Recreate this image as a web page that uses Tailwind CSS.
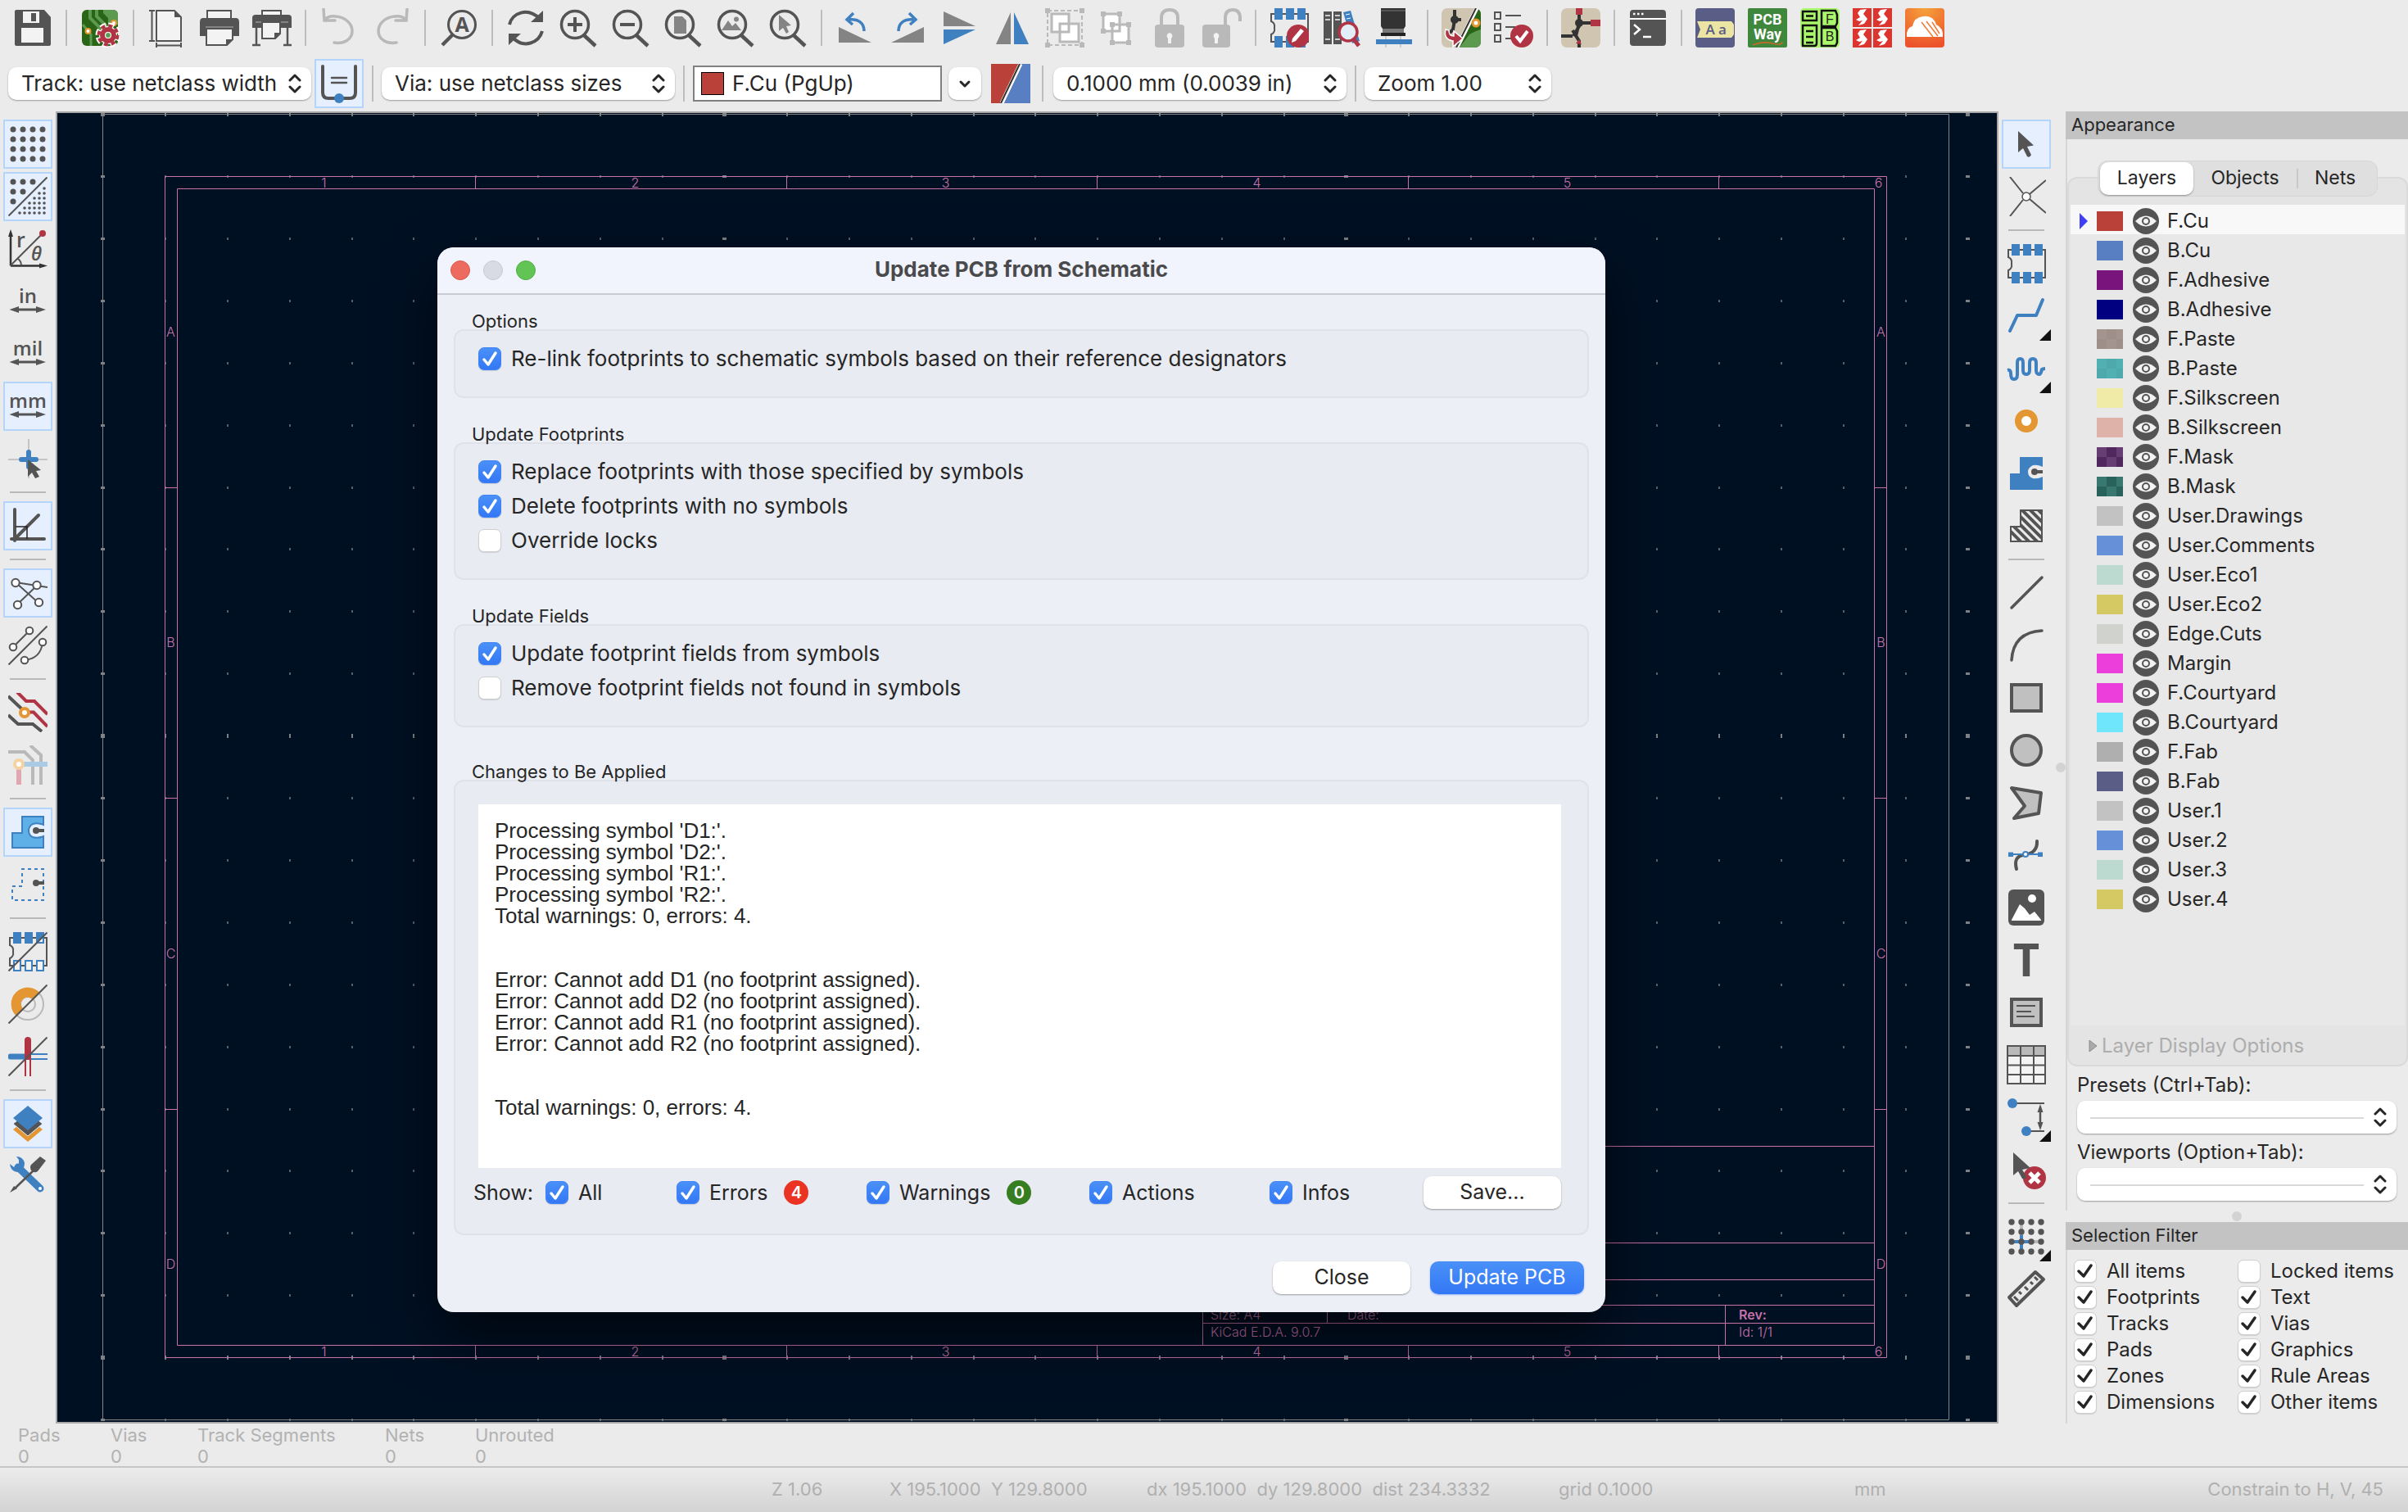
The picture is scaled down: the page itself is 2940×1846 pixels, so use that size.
<!DOCTYPE html>
<html lang="en">
<head>
    <meta charset="UTF-8">
    <meta name="viewport" content="width=device-width, initial-scale=1.0">
    <title>PCB Editor</title>
    <script src="https://cdn.jsdelivr.net/npm/@tailwindcss/browser@4"></script>
</head>
<body class="flex flex-col h-screen overflow-hidden bg-[#ebebeb] font-['Inter',sans-serif] text-[26px] leading-8 text-[#262626]">

    <!-- main toolbar -->
    <div id="topBar" class="flex items-center gap-1 h-17 pl-2.5 shrink-0"></div>

    <!-- track / via / layer / grid / zoom -->
    <div class="flex items-center h-17 pl-2.5 shrink-0">
        <div class="relative w-[370px] h-10">
            <select aria-label="Track width" class="appearance-none size-full pl-4 rounded-[10px] bg-white shadow-[0_1px_2px_rgba(0,0,0,0.35)]"><option>Track: use netclass width</option></select>
            <svg class="absolute right-3 top-2 w-4 h-6 pointer-events-none" viewBox="0 0 16 24" fill="none" stroke="#262626" stroke-width="3" stroke-linecap="round" stroke-linejoin="round"><path d="M2 8l6-6 6 6M2 16l6 6 6-6"/></svg>
        </div>
        <button aria-label="Use starting track width" class="ml-1 flex items-center justify-center size-15 border-2 border-[#b5d4fc] bg-[#e6effe]">
            <svg class="size-12" viewBox="0 0 48 48" fill="none" stroke="#545454" stroke-width="4" stroke-linecap="round"><path d="M4 3V35Q4 42 11 42H37Q44 42 44 35V3"/><path d="M15 17H33M15 23H33" stroke-width="2.5"/><circle cx="24" cy="42" r="6" fill="#3f80c0" stroke="none"/></svg>
        </button>
        <div class="mx-2.5 w-0.5 h-11 bg-[#bdbdbd]"></div>
        <div class="relative w-[358px] h-10">
            <select aria-label="Via size" class="appearance-none size-full pl-4 rounded-[10px] bg-white shadow-[0_1px_2px_rgba(0,0,0,0.35)]"><option>Via: use netclass sizes</option></select>
            <svg class="absolute right-3 top-2 w-4 h-6 pointer-events-none" viewBox="0 0 16 24" fill="none" stroke="#262626" stroke-width="3" stroke-linecap="round" stroke-linejoin="round"><path d="M2 8l6-6 6 6M2 16l6 6 6-6"/></svg>
        </div>
        <div class="mx-2.5 w-0.5 h-11 bg-[#bdbdbd]"></div>
        <div class="flex items-center gap-2.5 w-[304px] h-11 pl-2 border-2 border-[#808080] bg-white">
            <span class="size-7 shrink-0 border border-black bg-[#b9413a]"></span>
            <input aria-label="Active layer" type="text" readonly value="F.Cu (PgUp)" class="w-full min-w-0 outline-none">
        </div>
        <button aria-label="Choose layer" class="ml-2 flex items-center justify-center w-10 h-10 rounded-[10px] bg-white shadow-[0_1px_2px_rgba(0,0,0,0.35)]">
            <svg class="size-4" viewBox="0 0 16 16" fill="none" stroke="#262626" stroke-width="3" stroke-linecap="round" stroke-linejoin="round"><path d="M3 6l5 5 5-5"/></svg>
        </button>
        <button aria-label="Layer pair" class="ml-3">
            <svg class="size-12" viewBox="0 0 48 48"><path d="M0 0H34L12 48H0z" fill="#b9413a"/><path d="M36 0H48V48H14z" fill="#587fc2"/><path d="M36 0L13 48" stroke="#fff" stroke-width="5"/><path d="M35 0L12 48" stroke="#333" stroke-width="2"/></svg>
        </button>
        <div class="ml-3.5 mr-3 w-0.5 h-11 bg-[#bdbdbd]"></div>
        <div class="relative w-[358px] h-10">
            <select aria-label="Grid" class="appearance-none size-full pl-4 rounded-[10px] bg-white shadow-[0_1px_2px_rgba(0,0,0,0.35)]"><option>0.1000 mm (0.0039 in)</option></select>
            <svg class="absolute right-3 top-2 w-4 h-6 pointer-events-none" viewBox="0 0 16 24" fill="none" stroke="#262626" stroke-width="3" stroke-linecap="round" stroke-linejoin="round"><path d="M2 8l6-6 6 6M2 16l6 6 6-6"/></svg>
        </div>
        <div class="mx-2.5 w-0.5 h-11 bg-[#bdbdbd]"></div>
        <div class="relative w-[228px] h-10">
            <select aria-label="Zoom" class="appearance-none size-full pl-4 rounded-[10px] bg-white shadow-[0_1px_2px_rgba(0,0,0,0.35)]"><option>Zoom 1.00</option></select>
            <svg class="absolute right-3 top-2 w-4 h-6 pointer-events-none" viewBox="0 0 16 24" fill="none" stroke="#262626" stroke-width="3" stroke-linecap="round" stroke-linejoin="round"><path d="M2 8l6-6 6 6M2 16l6 6 6-6"/></svg>
        </div>
    </div>

    <main class="flex flex-1 min-h-0">
        <nav id="leftBar" class="flex flex-col gap-1 w-17 pl-1 pt-2.5 shrink-0"></nav>

        <div class="flex-1 min-w-0 border-2 border-[#a9a9a9] bg-[#001023]">
            <svg id="board" class="block size-full" viewBox="70 138 2368 1598" preserveAspectRatio="xMinYMin slice"></svg>
        </div>

        <nav id="rightBar" class="flex flex-col gap-1 w-[70px] pl-1 pt-2.5 shrink-0"></nav>
        <div class="flex items-center w-3 shrink-0"><span class="size-3 rounded-full bg-[#d3d3d3]"></span></div>

        <aside class="flex flex-col w-[418px] shrink-0 text-[24px]">
            <h2 class="h-[34px] pl-[7px] leading-8 text-[22px] bg-[#c3c3c3]">Appearance</h2>
            <div class="flex flex-col flex-1 min-h-0 border-l-2 border-[#d6d6d6]">
                <div class="flex flex-col flex-1 min-h-0 mt-[46px] rounded-xl border-2 border-[#dadada] bg-[#e4e4e4]">
                    <div class="flex items-center self-center -mt-[22px] h-11 w-[342px] p-0.5 rounded-xl bg-[#dfdfdf] border border-[#d6d6d6] text-[23px] shrink-0">
                        <button class="w-[114px] h-10 pb-0.5 rounded-[10px] bg-white shadow-[0_1px_2px_rgba(0,0,0,0.35)]">Layers</button>
                        <button class="w-[126px] pb-0.5">Objects</button>
                        <span class="w-0.5 h-6 bg-[#c8c8c8]"></span>
                        <button class="flex-1 pb-0.5 pr-1">Nets</button>
                    </div>
                    <ul id="layers" class="flex-1 min-h-0 mt-2.5 mx-0.5 overflow-hidden bg-[#e8e8e8]"></ul>
                    <button class="flex items-center gap-1 h-12 pl-6 pt-0.5 text-[#adadad]">
                        <svg class="w-3 h-4" viewBox="0 0 12 16"><path d="M1 1L10 8 1 15z" fill="#a9a9a9" stroke="#8d8d8d"/></svg>
                        Layer Display Options
                    </button>
                </div>
                <label for="presets" class="h-[42px] pl-3 leading-[46px]">Presets (Ctrl+Tab):</label>
                <div class="relative ml-3 mr-3.5 h-10">
                    <select id="presets" class="appearance-none size-full rounded-[10px] bg-white shadow-[0_1px_2px_rgba(0,0,0,0.35)]"><option></option></select>
                    <span class="absolute left-4 right-10 top-5 h-0.5 bg-[#d9d9d9]"></span>
                    <svg class="absolute right-3 top-2 w-4 h-6 pointer-events-none" viewBox="0 0 16 24" fill="none" stroke="#262626" stroke-width="3" stroke-linecap="round" stroke-linejoin="round"><path d="M2 8l6-6 6 6M2 16l6 6 6-6"/></svg>
                </div>
                <label for="viewports" class="h-[42px] pl-3 leading-[46px]">Viewports (Option+Tab):</label>
                <div class="relative ml-3 mr-3.5 mb-3 h-10">
                    <select id="viewports" class="appearance-none size-full rounded-[10px] bg-white shadow-[0_1px_2px_rgba(0,0,0,0.35)]"><option></option></select>
                    <span class="absolute left-4 right-10 top-5 h-0.5 bg-[#d9d9d9]"></span>
                    <svg class="absolute right-3 top-2 w-4 h-6 pointer-events-none" viewBox="0 0 16 24" fill="none" stroke="#262626" stroke-width="3" stroke-linecap="round" stroke-linejoin="round"><path d="M2 8l6-6 6 6M2 16l6 6 6-6"/></svg>
                </div>
            </div>
            <div class="flex justify-center items-center h-3.5"><span class="size-3 rounded-full bg-[#d3d3d3]"></span></div>
            <h2 class="h-[34px] pl-[7px] leading-8 text-[22px] bg-[#c3c3c3]">Selection Filter</h2>
            <div id="filter" class="grid grid-cols-[200px_1fr] auto-rows-[32px] py-2.5 pl-2 border-l-2 border-[#d6d6d6] whitespace-nowrap"></div>
        </aside>
    </main>

    <!-- board statistics -->
    <dl class="flex h-13 pl-[22px] pt-px shrink-0 text-[22px] leading-[26px] text-[#b2b2b2]">
        <div class="w-[113px]"><dt>Pads</dt><dd>0</dd></div>
        <div class="w-[106px]"><dt>Vias</dt><dd>0</dd></div>
        <div class="w-[229px]"><dt>Track Segments</dt><dd>0</dd></div>
        <div class="w-[110px]"><dt>Nets</dt><dd>0</dd></div>
        <div><dt>Unrouted</dt><dd>0</dd></div>
    </dl>

    <footer class="flex items-center h-14 pl-[942px] pr-[30px] pb-0.5 shrink-0 border-t-2 border-[#c6c6c6] bg-linear-to-b from-[#ececec] to-[#d3d3d3] text-[22px] text-[#b0b0b0] whitespace-pre">
        <span class="w-[144px]">Z 1.06</span>
        <span class="w-[314px]">X 195.1000  Y 129.8000</span>
        <span class="w-[503px]">dx 195.1000  dy 129.8000  dist 234.3332</span>
        <span class="w-[361px]">grid 0.1000</span>
        <span>mm</span>
        <span class="ml-auto">Constrain to H, V, 45</span>
    </footer>

    <div role="dialog" aria-labelledby="dialogTitle" class="absolute left-[534px] top-[302px] w-[1426px] rounded-[20px] overflow-hidden bg-[#eceff5] shadow-[0_30px_70px_rgba(0,0,0,0.6)]">
        <div class="relative flex items-center gap-4 h-[58px] pl-4 border-b-2 border-[#c9ccd2] bg-[#f1f4fc]">
            <button aria-label="Close window" class="size-6 rounded-full border border-[#d8584c] bg-[#ed6a5e]"></button>
            <button aria-label="Minimize" class="size-6 rounded-full border border-[#c6c9d0] bg-[#d8dbe3]"></button>
            <button aria-label="Zoom window" class="size-6 rounded-full border border-[#53ad45] bg-[#61c454]"></button>
            <h1 id="dialogTitle" class="absolute inset-x-0 pb-0.5 text-center font-bold text-[#4a4a4c] pointer-events-none">Update PCB from Schematic</h1>
        </div>
        <div class="px-5 pt-5 pb-[22px]">
            <h2 class="h-[22px] pl-[22px] leading-6 text-[22px]">Options</h2>
            <div id="options" class="flex flex-col gap-3.5 px-7 pt-5 pb-8 rounded-xl border-2 border-[#dfe2e8] bg-[#e8ebf1]"></div>

            <h2 class="mt-8 h-[22px] pl-[22px] leading-6 text-[22px]">Update Footprints</h2>
            <div id="footprints" class="flex flex-col gap-3.5 px-7 pt-5 pb-8 rounded-xl border-2 border-[#dfe2e8] bg-[#e8ebf1]"></div>

            <h2 class="mt-8 h-[22px] pl-[22px] leading-6 text-[22px]">Update Fields</h2>
            <div id="fields" class="flex flex-col gap-3.5 px-7 pt-5 pb-8 rounded-xl border-2 border-[#dfe2e8] bg-[#e8ebf1]"></div>

            <h2 class="mt-[42px] h-[22px] pl-[22px] leading-6 text-[22px]">Changes to Be Applied</h2>
            <div class="pl-7 pr-8 pt-7 pb-[30px] rounded-xl border-2 border-[#dfe2e8] bg-[#e8ebf1]">
                <div class="h-[444px] pl-5 pt-[19px] bg-white font-['Liberation_Sans',Arial,sans-serif] text-[26px] leading-[26px] whitespace-pre">Processing symbol 'D1:'.
Processing symbol 'D2:'.
Processing symbol 'R1:'.
Processing symbol 'R2:'.
Total warnings: 0, errors: 4.


Error: Cannot add D1 (no footprint assigned).
Error: Cannot add D2 (no footprint assigned).
Error: Cannot add R1 (no footprint assigned).
Error: Cannot add R2 (no footprint assigned).


Total warnings: 0, errors: 4.</div>
                <div class="grid grid-cols-[88px_160px_232px_272px_220px_1fr] items-center -ml-1.5 mt-2.5 h-10 text-[25px]">
                    <span>Show:</span>
                    <div data-check="All"></div>
                    <div data-check="Errors" class="flex items-center gap-5"></div>
                    <div data-check="Warnings" class="flex items-center gap-5"></div>
                    <div data-check="Actions"></div>
                    <div class="flex items-center justify-between">
                        <div data-check="Infos"></div>
                    </div>
                </div>
            </div>
            <div class="flex justify-end gap-6 mt-8 mr-1.5 text-[25px]">
                <button class="w-[168px] h-10 pb-0.5 rounded-[10px] bg-white shadow-[0_1px_2px_rgba(0,0,0,0.35)]">Close</button>
                <button class="w-[188px] h-10 pb-0.5 rounded-[10px] bg-linear-to-b from-[#4a90f8] to-[#3477f5] text-white shadow-[0_1px_2px_rgba(52,119,245,0.5)]">Update PCB</button>
            </div>
        </div>
    </div>

    <script>
        const D = "#545454", B = "#3f80c0", R = "#b03444", O = "#e49632", L = "#b9b9b9", G = "#848484";

        const footprint = (y1, y2) => `<path d="M2 ${y1}V16Q7 18 6 24Q7 30 2 32V${y2}H47V${y1}z" fill="none" stroke="${D}" stroke-width="2"/>`;
        const pads = (y) => `<path d="M6 ${y}h10v14h-10zM20 ${y}h10v14h-10zM34 ${y}h10v14h-10z" fill="${B}"/>`;
        const lens = `<circle cx="20" cy="20" r="16.5" fill="none" stroke="${D}" stroke-width="3.5"/><path d="M31 33L45 46" stroke="${D}" stroke-width="4.5"/>`;
        const slash = `<path d="M.5 47.5L47.5 .5" stroke="${D}" stroke-width="2"/>`;
        const cursor = (x, y) => `<path transform="translate(${x} ${y})" d="M0 0V26L6 21L11 31Q14 33 16 29L11 19L19 17.5z" fill="${D}"/>`;
        const unit = (t) => `<text x="24" y="26" font-family="Open Sans" font-weight="600" font-size="24" text-anchor="middle" fill="${D}">${t}</text><path d="M1.5 34L13 30V32.5H34V30L46 34L34 38V35.5H13V38z" fill="${D}"/>`;
        const dots = (list, r) => list.map(([x, y]) => `<circle cx="${x}" cy="${y}" r="${r}" fill="${D}"/>`).join("");
        const grid4 = [];
        for (const y of [6, 18, 30, 42]) for (const x of [6, 18, 30, 42]) grid4.push([x, y]);
        const fine = [];
        for (let i = 0; i < 6; i++) for (let j = 5 - i; j < 6; j++) fine.push([14 + j * 6, 14 + i * 6]);

        const icons = {
            save: `<path d="M2 4Q2 2 4 2H38L46 11V44Q46 46 44 46H4Q2 46 2 44z" fill="${D}"/><path d="M12 4H32V18H12zM10 24H37V42H10z" fill="#f3f3f3"/><path d="M22 6H28V16H22z" fill="${D}"/>`,
            boardSetup: `<rect x="2" y="2" width="44" height="44" rx="6" fill="#2a6416"/><path d="M12 2V12L24 24V30M20 2V10L32 22V28" fill="none" stroke="#5c9a50" stroke-width="4"/><path d="M28 2V6L34 12V20H46V8Q46 2 40 2z" fill="#5c9a50"/><path d="M3 20L13 32V46" fill="none" stroke="#5c9a50" stroke-width="3"/><circle cx="9.5" cy="28" r="3" fill="#fff" stroke="${O}" stroke-width="2"/><circle cx="41" cy="18" r="3" fill="#fff" stroke="${O}" stroke-width="2"/><circle cx="34" cy="33" r="11" fill="none" stroke="#fff" stroke-width="9" stroke-dasharray="6 2.64"/><circle cx="34" cy="33" r="11" fill="#fff"/><circle cx="34" cy="33" r="7" fill="none" stroke="${R}" stroke-width="6"/><circle cx="34" cy="33" r="11.5" fill="none" stroke="${R}" stroke-width="4" stroke-dasharray="5 4.03"/><circle cx="34" cy="33" r="3.5" fill="#5c9a50" stroke="#fff"/>`,
            page: `<path d="M2 3H9M2 40H9M5.5 3V40M11 42V48M41 42V48M11 45.5H41" fill="none" stroke="${D}" stroke-width="2"/><path d="M11 3H33L41 11V40H11z" fill="#f3f3f3" stroke="${D}" stroke-width="2"/><path d="M33 3V11H41z" fill="${D}"/>`,
            print: `<path d="M9 13V3H38V13" fill="#f3f3f3" stroke="${D}" stroke-width="2"/><path d="M4 12H44Q48 12 48 17V34H0V17Q0 12 4 12z" fill="${D}"/><path d="M7 23H41" stroke="${G}" stroke-width="2"/><path d="M8 25H40V38L33 45H8z" fill="#f3f3f3" stroke="${D}" stroke-width="2"/><path d="M32 38H40L32 46z" fill="${D}"/>`,
            plot: `<path d="M12 9V3H35V9" fill="#f3f3f3" stroke="${D}" stroke-width="2"/><path d="M4 8H44Q48 8 48 12V24H0V12Q0 8 4 8z" fill="${D}"/><path d="M4 17H44" stroke="${G}" stroke-width="2"/><path d="M5 24V45M0 45H10M43 24V45M38 45H48" stroke="${D}" stroke-width="2.5"/><path d="M12 17H34V31L28 37H12z" fill="#f3f3f3" stroke="${D}" stroke-width="2"/><path d="M27 30H34L27 38z" fill="${D}"/>`,
            undo: `<path d="M5 1L6 15H19M6 15C8 11 14 9 20 10C32 11 40 19 40 28C40 38 30 44 18 42" fill="none" stroke="${L}" stroke-width="3.5" stroke-linecap="round"/>`,
            redo: `<path d="M43 1L42 15H29M42 15C40 11 34 9 28 10C16 11 8 19 8 28C8 38 18 44 30 42" fill="none" stroke="${L}" stroke-width="3.5" stroke-linecap="round"/>`,
            find: `<circle cx="28" cy="20" r="16.5" fill="none" stroke="${D}" stroke-width="3"/><path d="M17 32L4 45" stroke="${D}" stroke-width="4.5"/><text x="28" y="29" font-family="Open Sans" font-weight="700" font-size="25" text-anchor="middle" fill="${D}">A</text>`,
            refresh: `<path d="M4 20C7 6 26 -2 41 13M44 28C40 42 22 50 8 36" fill="none" stroke="${D}" stroke-width="4"/><path d="M45 3V17H30zM3 45V31H18z" fill="${D}"/>`,
            zoomIn: lens + `<path d="M11 20H29M20 11V29" stroke="${D}" stroke-width="4"/>`,
            zoomOut: lens + `<path d="M11 20H29" stroke="${D}" stroke-width="4"/>`,
            zoomFit: lens + `<path d="M13 10H23L28 15V31H13z" fill="${G}"/>`,
            zoomObjects: lens + `<path d="M7 27L15 15L20 22L24 18L31 27z" fill="${G}"/><circle cx="25" cy="13.5" r="3" fill="${G}"/>`,
            zoomSelection: lens + `<path d="M13 8V28L18 24L22 31L25 29L22 22L28 21z" fill="${G}"/>`,
            rotateCcw: `<path d="M4 23V42H44z" fill="${G}"/><path d="M35 28C35 18 28 13 17 14M22 6L14 14L21 20" fill="none" stroke="${B}" stroke-width="3.5"/>`,
            rotateCw: `<path d="M44 23V42H4z" fill="${G}"/><path d="M13 28C13 18 20 13 31 14M26 6L34 14L27 20" fill="none" stroke="${B}" stroke-width="3.5"/>`,
            mirrorV: `<path d="M4 4L43 22H4z" fill="${G}"/><path d="M4 26H43L4 44z" fill="${B}"/>`,
            mirrorH: `<path d="M22 5V44H4z" fill="${G}"/><path d="M26 5V44H44z" fill="${B}"/>`,
            group: `<rect x="3" y="3" width="42" height="42" fill="none" stroke="${L}" stroke-width="2" stroke-dasharray="5 3"/><path d="M0 0h6v6h-6zM42 0h6v6h-6zM0 42h6v6h-6zM42 42h6v6h-6z" fill="${L}"/><path d="M8 7H29V29H8zM18 19H41V41H18z" fill="#fff" stroke="${L}" stroke-width="3"/>`,
            ungroup: `<path d="M7 7H27V28H7zM18 20H38V42H18z" fill="#fff" stroke="${L}" stroke-width="3"/><path d="M4 4h6v6h-6zM24 4h6v6h-6zM4 25h6v6h-6zM15 17h6v6h-6zM35 17h6v6h-6zM15 39h6v6h-6zM35 39h6v6h-6z" fill="${L}"/>`,
            lock: `<path d="M14 22V12Q14 2 24 2T34 12V22" fill="none" stroke="${L}" stroke-width="4"/><rect x="6" y="20" width="36" height="28" rx="4" fill="${L}"/><path d="M24 30a4 4 0 0 1 2 7V43H22V37a4 4 0 0 1 2-7z" fill="#f3f3f3"/>`,
            unlock: `<path d="M28 22V12Q28 2 37 2T46 12V16" fill="none" stroke="${L}" stroke-width="4"/><rect x="0" y="20" width="34" height="28" rx="4" fill="${L}"/><path d="M17 30a4 4 0 0 1 2 7V43H15V37a4 4 0 0 1 2-7z" fill="#f3f3f3"/>`,
            fpEditor: footprint(7, 41) + pads(0) + pads(34) + `<circle cx="35" cy="34" r="14" fill="${R}"/><path d="M27 42L28 37L38 25L42 28L32 40z" fill="#fff"/>`,
            fpLibrary: `<path d="M2 4H12V44H2zM14 4H24V44H14z" fill="${D}"/><path d="M4 9h6M4 14h6M16 9h6M16 14h6M4 38h6M16 38h6" stroke="#ccc" stroke-width="2"/><path d="M26 5L35 3L46 40L37 43z" fill="${B}"/><path d="M29 8l5-1M30 13l5-1" stroke="#fff"/><circle cx="32" cy="29" r="11" fill="#e2edf7" stroke="${R}" stroke-width="3.5"/><path d="M39 38L45 46" stroke="${R}" stroke-width="5"/>`,
            viewer3d: `<path d="M8 0H38V22L36 25V30H10V25L8 22z" fill="#333"/><path d="M8 3H38" stroke="#555" stroke-width="2"/><path d="M10 25H36V30H10z" fill="#777"/><path d="M8 30H38V34H8z" fill="#222"/><path d="M2 38H46V44H2z" fill="${B}"/><path d="M14 34V38M32 34V38M14 44V48M32 44V48" stroke="#ccc" stroke-width="2"/>`,
            updatePcb: `<rect width="48" height="48" rx="7" fill="#cfc5b0"/><path d="M40 0Q48 0 48 8V40Q48 48 40 48H20L44 0z" fill="#2a6416"/><path d="M48 26V40Q48 48 40 48H22L34 32L42 28z" fill="#5c9a50"/><path d="M16 2V14L14 26L6 34M16 14H24" stroke="#333" stroke-width="4" fill="none"/><circle cx="16" cy="14" r="5" fill="#333"/><path d="M43 0L19 48" stroke="#fff" stroke-width="5"/><path d="M42 0L18 48" stroke="#333" stroke-width="2"/><circle cx="42" cy="18" r="4" fill="#fff" stroke="${O}" stroke-width="3"/><path d="M5 26Q2 38 14 40V47L26 37L15 28V34Q9 34 9 27z" fill="${R}" stroke="#fff" stroke-width="1.5"/>`,
            drc: `<path d="M1 5h7v8h-7zM1 19h7v8h-7zM1 33h7v8h-7zM14 9H33M14 23H26M14 37H22" fill="none" stroke="${D}" stroke-width="2"/><circle cx="34" cy="34" r="14" fill="${R}"/><path d="M27 34L32 40L41 28" fill="none" stroke="#fff" stroke-width="4"/>`,
            schematic: `<rect width="48" height="48" rx="7" fill="#cfc5b0"/><path d="M22 0V18L18 34M22 18H38M0 34H14M14 27L22 40V48M22 18V22L15 34" fill="none" stroke="#333" stroke-width="4"/><circle cx="22" cy="18" r="5" fill="#333"/><path d="M18 0H26V8H18zM36 14H48V22H36zM18 43L22 38L25 44z" fill="${R}"/>`,
            console: `<rect x="2" y="2" width="44" height="44" rx="4" fill="${D}"/><path d="M2 13H46" stroke="#fff" stroke-width="2"/><path d="M6 7h2.5M11 7h2.5M16 7h2.5" stroke="#fff" stroke-width="2.5"/><path d="M7 20L14 26L7 32M18 35H28" fill="none" stroke="#fff" stroke-width="2.5"/>`,
            textPlugin: `<rect width="48" height="48" rx="4" fill="#5a5d85"/><path d="M2 16H44L47 20V32L44 36H2L6 26z" fill="#ebe4a2"/><text x="18" y="32" font-family="Open Sans" font-weight="600" font-size="17" text-anchor="middle" fill="#5a5d85">A</text><text x="33" y="32" font-family="Open Sans" font-weight="600" font-size="17" text-anchor="middle" fill="#5a5d85">a</text>`,
            pcbway: `<rect width="48" height="48" rx="2" fill="#3f873c"/><text x="24" y="20" font-family="Roboto" font-weight="700" font-size="18" text-anchor="middle" fill="#fff">PCB</text><text x="24" y="38" font-family="Roboto" font-weight="700" font-size="18" text-anchor="middle" fill="#fff">Way</text><path d="M6 45Q18 40 30 43T42 41" fill="none" stroke="#c8692c" stroke-width="1.5"/>`,
            panels: `<rect width="48" height="48" rx="5" fill="#aaf76a"/><path d="M3 4H20V15H3zM3 21H20V43Q20 46 17 46H3zM26 3H43L45 8V18L43 22H26zM26 24H43L45 28V42L43 46H26zM7 9.5H16M7 28H16M7 35H16M7 42H16" fill="none" stroke="#111" stroke-width="2.5"/><text x="36" y="19" font-family="Liberation Sans" font-size="16" text-anchor="middle" fill="#222">F</text><text x="36" y="40" font-family="Liberation Sans" font-size="16" text-anchor="middle" fill="#222">B</text>`,
            panelize: [[0, 0], [25, 0], [0, 25], [25, 25]].map(([x, y]) => `<g transform="translate(${x} ${y})"><path d="M0 0H23V23H0z" fill="#dc352f"/><path d="M17 1L9 2L6 6L9 11L4 14L8 16L12 15L7 21L14 19L18 13L13 7z" fill="#fff"/></g>`).join(""),
            cloud: `<defs><radialGradient id="sun" cx=".5" cy="0" r="1"><stop offset="0" stop-color="#f5a33a"/><stop offset="1" stop-color="#ec522c"/></radialGradient></defs><rect width="48" height="48" rx="4" fill="url(#sun)"/><path d="M2 35Q1 24 9 22Q11 11 22 10Q34 8 38 20Q47 24 46 35z" fill="#fff"/><path d="M20 17L34 35M26 16L40 34M33 17L42 31" stroke="#ee7a35" stroke-width="1.5"/>`,

            grid: dots(grid4, 3.5),
            gridOverrides: dots([[6, 6], [18, 6], [30, 6], [6, 18], [18, 18], [6, 30]], 3.5) + dots(fine, 1.8) + slash,
            polar: `<path d="M3 44.5V4M3 44.5H44" stroke="#333" stroke-width="2.5"/><path d="M3 0L6 9H0zM48 44.5L38 41.5V47.5z" fill="#333"/><path d="M3 44L42 5M12 36Q16 39 16 44" fill="none" stroke="${D}" stroke-width="2"/><circle cx="42" cy="5" r="4" fill="${R}"/><text x="10" y="22" font-family="Open Sans" font-weight="600" font-size="25" fill="${D}">r</text><text x="28" y="38" font-family="Open Sans" font-style="italic" font-weight="600" font-size="23" fill="${D}">θ</text>`,
            inch: unit("in"), mil: unit("mil"), mm: unit("mm"),
            crosshair: `<path d="M0 25H48M25 0V48" stroke="${L}" stroke-width="1.5"/><path d="M16 25H34M25 16V34" stroke="${B}" stroke-width="6" stroke-linecap="round"/><path d="M24 25V46L29 41L33 48L38 46L34 39L40 38z" fill="${D}"/>`,
            angle45: `<path d="M8 4V42M4 40H44M9 39L37 11" fill="none" stroke="${D}" stroke-width="4" stroke-linecap="round"/><path d="M9 25H23V40" fill="none" stroke="#222" stroke-width="1.5"/>`,
            ratsnest: `<path d="M9 11L35 15L48 17M9 11L37 36M11 38L35 15" stroke="${D}" stroke-width="2" fill="none"/><g fill="#fff" stroke="${D}" stroke-width="2"><circle cx="9" cy="11.5" r="4.7"/><circle cx="35" cy="14.5" r="4.7"/><circle cx="11.5" cy="38.5" r="4.7"/><circle cx="37.5" cy="35.5" r="4.7"/></g>`,
            curvedRatsnest: slash + `<path d="M6 26L26 6M20 42Q40 40 42 20" stroke="${D}" stroke-width="2" fill="none"/><g fill="#fff" stroke="${D}" stroke-width="2"><circle cx="26" cy="6" r="4.3"/><circle cx="6" cy="26" r="4.3"/><circle cx="42" cy="20" r="4.3"/><circle cx="20" cy="42" r="4.3"/></g>`,
            netColors: `<path d="M0 4L16 19M0 27L12 38H30L41 47" fill="none" stroke="${D}" stroke-width="4"/><path d="M11 -1L22 10H32L48 26M24 23.5H31L48 41" fill="none" stroke="${R}" stroke-width="4"/><circle cx="20" cy="24" r="5" fill="#fff" stroke="${O}" stroke-width="4"/>`,
            dimLayers: `<path d="M0 8H20L30 18V48M27 0L40 12V48" fill="none" stroke="${L}" stroke-width="4"/><path d="M18 23H48" stroke="#a9cbe5" stroke-width="6"/><path d="M13 28V48" stroke="#dfa8b0" stroke-width="6"/><circle cx="13" cy="23" r="5" fill="#fff" stroke="#f4d3a0" stroke-width="4"/>`,
            zoneFill: `<path d="M5 25H17V5H43V15Q36 12 30 14Q25 17 25 22Q25 28 30 30Q36 32 43 29V43H5z" fill="#5fb0e6" stroke="${B}" stroke-width="2"/><path d="M43 16Q27 12 27 22Q27 32 43 28z" fill="#e6effe"/><circle cx="34" cy="22" r="4" fill="${D}"/><path d="M34 22H44" stroke="${D}" stroke-width="4"/>`,
            zoneOutline: `<path d="M5 26H17V5H43V43H5z" fill="none" stroke="${B}" stroke-width="2" stroke-dasharray="4 4"/><circle cx="34" cy="22" r="4" fill="${D}"/><path d="M34 22H44" stroke="${D}" stroke-width="4"/>`,
            fpOutline: footprint(7, 41) + pads(0) + `<path d="M7 35h8v12h-8zM21 35h8v12h-8zM35 35h8v12h-8z" fill="#f3f3f3" stroke="${B}" stroke-width="2"/><path d="M36 12L42 6V12z" fill="#f3f3f3"/>` + slash,
            padOutline: `<circle cx="24" cy="24" r="19" fill="none" stroke="${L}" stroke-width="2"/><circle cx="24" cy="24" r="9" fill="none" stroke="${L}" stroke-width="2"/><path d="M9.5 38A20 20 0 0 1 38 9.5L29.5 18A8 8 0 0 0 18 29.5z" fill="${O}"/>` + slash,
            trackOutline: `<path d="M3 24H22" stroke="${B}" stroke-width="7" stroke-linecap="round"/><path d="M22 21H48M22 27H48" stroke="${B}" stroke-width="2"/><path d="M24 4V24" stroke="${R}" stroke-width="8" stroke-linecap="round"/><path d="M21 22V48M27 22V48" stroke="${R}" stroke-width="2"/>` + slash,
            layers: `<path d="M6 31L24 17L42 31L24 46z" fill="${O}"/><path d="M6 24L24 10L42 24L24 39z" fill="${D}" stroke="#e6effe"/><path d="M6 17L24 2L42 17L24 32z" fill="${B}"/>`,
            tools: `<path d="M12 13L39 39" stroke="${B}" stroke-width="9" stroke-linecap="round"/><path d="M10 0Q18 0 20 8Q20 18 11 19Q3 18 2 9L7 13L13 9L13 4z" fill="${B}"/><circle cx="39" cy="39" r="2" fill="#fff"/><path d="M31 17L8 39" stroke="${D}" stroke-width="2.5"/><path d="M2 44L7 36L11 39z" fill="${D}"/><path d="M28 10L39 0L46 5L36 18Q32 21 28 17Q26 13 28 10z" fill="${D}"/>`,

            select: cursor(14, 8),
            localRatsnest: `<path d="M4 0L20 20M48 4L28 21M4 48L20 28M48 44L28 27" stroke="${D}" stroke-width="2"/><circle cx="24" cy="24" r="5" fill="#fff" stroke="${D}" stroke-width="1.5"/>`,
            footprint: footprint(7, 41) + pads(0) + pads(34),
            route: `<path d="M4 42L13 23H36L44 4" fill="none" stroke="${B}" stroke-width="4" stroke-linecap="round" stroke-linejoin="round"/>`,
            tune: `<path d="M1 26Q5 25 5 30Q5 37 9 37Q13 37 13 31V17Q13 12 16.5 12Q20 12 20 17V26Q20 31 24 31Q28 31 28 26V17Q28 12 32 12Q36 12 36 17V26Q36 31 40 31Q42 30 43 25Q44 24 47 24" fill="none" stroke="${B}" stroke-width="4"/>`,
            via: `<circle cx="24" cy="24" r="10" fill="#fff" stroke="${O}" stroke-width="8"/>`,
            zone: `<path d="M4 24H16V4H44V16Q38 13 32 14Q26 17 26 22Q26 28 32 30Q38 31 44 28V44H4z" fill="${B}"/><circle cx="34" cy="22" r="4" fill="${D}"/><path d="M34 22H44" stroke="${D}" stroke-width="4"/>`,
            keepout: `<clipPath id="ko"><path d="M5 25H17V5H43V43H5z"/></clipPath><g clip-path="url(#ko)"><path d="M-6 20L24 50M2 18L34 50M8 14L44 50M8 4L50 46M16 2L50 36M26 2L50 26M36 2L50 16" stroke="${D}" stroke-width="4"/></g><path d="M5 25H17V5H43V43H5z" fill="none" stroke="${D}" stroke-width="2"/>`,
            line: `<path d="M6 42L43 5" stroke="${D}" stroke-width="3.5" stroke-linecap="round"/>`,
            arc: `<path d="M6 42Q8 8 43 6" fill="none" stroke="${D}" stroke-width="3.5" stroke-linecap="round"/>`,
            rect: `<rect x="6" y="8" width="36" height="32" fill="#c0c0c0" stroke="${D}" stroke-width="4"/>`,
            circle: `<circle cx="24" cy="24" r="18" fill="#c0c0c0" stroke="${D}" stroke-width="4"/>`,
            polygon: `<path d="M6 6L42 12L39 37L9 43L22 28z" fill="#c0c0c0" stroke="${D}" stroke-width="4" stroke-linejoin="round"/>`,
            bezier: `<path d="M12 41Q8 26 20 24Q38 22 37 7" fill="none" stroke="${D}" stroke-width="4" stroke-linecap="round"/><path d="M4 23H42" stroke="${B}" stroke-width="2"/><path d="M2 20.5h6v5.5h-6zM38 20.5h6v5.5h-6z" fill="${B}"/><circle cx="23" cy="23" r="3" fill="#fff" stroke="${B}" stroke-width="2"/>`,
            image: `<rect x="2" y="2" width="44" height="44" rx="6" fill="${D}"/><circle cx="31" cy="13" r="5" fill="#fff"/><path d="M6 39L16 20L22 25L28 33L34 29L42 39V40H6z" fill="#fff"/>`,
            text: `<text x="24" y="44" font-family="Open Sans" font-weight="700" font-size="56" text-anchor="middle" fill="${D}">T</text>`,
            textBox: `<rect x="6" y="8" width="36" height="32" fill="#c0c0c0" stroke="${D}" stroke-width="4"/><path d="M12 16H35M12 23H30M12 29H34" stroke="${D}" stroke-width="2"/>`,
            table: `<path d="M1 1H47V47H1z" fill="#f3f3f3"/><path d="M1 1H47V13H1z" fill="${L}"/><path d="M1 1H47V47H1zM1 13H47M1 24.5H47M1 36H47M17 1V47M33 1V47" fill="none" stroke="${D}" stroke-width="2"/>`,
            dimension: `<path d="M7 7H46M24 41H46" stroke="${D}" stroke-width="2"/><path d="M41 14V34" stroke="${D}" stroke-width="2.5"/><path d="M41 8L44.5 18H37.5zM41 40L37.5 30H44.5z" fill="${D}"/><circle cx="7" cy="7" r="6" fill="${B}"/><circle cx="24" cy="41" r="6" fill="${B}"/>`,
            remove: `<circle cx="34" cy="34" r="14" fill="${R}"/><path d="M28 28L40 40M40 28L28 40" stroke="#fff" stroke-width="5"/><path d="M8 3V31L14 26L19 35Q23 37 24 32L19 24L29 22z" fill="${D}"/>`,
            gridOrigin: `<path d="M18 6V42M6 30H42" stroke="${L}" stroke-width="4"/><path d="M18 22V42M8 30H30" stroke="${B}" stroke-width="4"/>` + dots(grid4, 3.7),
            measure: `<path d="M3 34L35 3L45 12L12 44z" fill="none" stroke="${D}" stroke-width="4" stroke-linejoin="round"/><path d="M9 33L14 38M15 27L18 30M22 21L26 25M29 15L32 18M34 9L38 13" stroke="${D}" stroke-width="3"/>`,
        };

        // "|" draws a separator, "*" marks a toggled tool, "+" a tool that opens a palette
        function fillBar(id, names, vertical) {
            document.getElementById(id).innerHTML = names.split(" ").map((n) => {
                if (n === "|") return vertical ? `<div class="mx-2 my-1.5 w-11 h-0.5 shrink-0 bg-[#b9b9b9]"></div>` : `<div class="mx-1.5 w-0.5 h-11 shrink-0 bg-[#bdbdbd]"></div>`;
                const name = n.replace(/[*+]/, "");
                const on = n.endsWith("*") ? "border-2 border-[#b5d4fc] bg-[#e6effe]" : "";
                const corner = n.endsWith("+") ? `<svg class="absolute right-0 bottom-0 size-3.5" viewBox="0 0 14 14"><path d="M0 14L14 0V14z" fill="#111"/></svg>` : "";
                return `<button aria-label="${name}" class="relative flex items-center justify-center size-15 shrink-0 ${on}"><svg class="size-12 ${name === "text" || name === "polar" ? "overflow-visible" : ""}" viewBox="0 0 48 48">${icons[name]}</svg>${corner}</button>`;
            }).join("");
        }
        fillBar("topBar", "save | boardSetup | page print plot | undo redo | find | refresh zoomIn zoomOut zoomFit zoomObjects zoomSelection | rotateCcw rotateCw mirrorV mirrorH group ungroup lock unlock | fpEditor fpLibrary viewer3d | updatePcb drc | schematic | console | textPlugin pcbway panels panelize cloud");
        fillBar("leftBar", "grid* gridOverrides* polar inch mil mm* crosshair | angle45* | ratsnest* curvedRatsnest | netColors dimLayers | zoneFill* zoneOutline | fpOutline padOutline trackOutline | layers* tools", true);
        fillBar("rightBar", "select* localRatsnest | footprint route+ tune+ via zone keepout | line arc rect circle polygon bezier image text textBox table dimension+ remove | gridOrigin+ measure", true);

        // layer list
        const layers = [
            ["F.Cu", "#b9413a"], ["B.Cu", "#587fc2"], ["F.Adhesive", "#79147d"], ["B.Adhesive", "#000080"],
            ["F.Paste", "#a39490", "#9e8f88"], ["B.Paste", "#50b0b2", "#4da9ab"], ["F.Silkscreen", "#f0eca8"], ["B.Silkscreen", "#dfb2a9"],
            ["F.Mask", "#673e74", "#50285f"], ["B.Mask", "#397870", "#29625b"], ["User.Drawings", "#c2c2c2"], ["User.Comments", "#6691d8"],
            ["User.Eco1", "#bcdad0"], ["User.Eco2", "#d5c964"], ["Edge.Cuts", "#d0d2cd"], ["Margin", "#ec3edb"],
            ["F.Courtyard", "#ec3edb"], ["B.Courtyard", "#70e6fc"], ["F.Fab", "#afafaf"], ["B.Fab", "#5a5d85"],
            ["User.1", "#c2c2c2"], ["User.2", "#6691d8"], ["User.3", "#bcdad0"], ["User.4", "#d5c964"],
        ];
        document.getElementById("layers").innerHTML = layers.map(([name, color, alt], i) => `
            <li class="flex items-center h-9 pt-1 pl-2.5 ${i ? "" : "bg-[#f8f8f8]"}">
                <svg class="w-[22px] h-5" viewBox="0 0 22 20">${i ? "" : `<path d="M1 0L11 10L1 20z" fill="#3f3ff5"/>`}</svg>
                <svg class="w-8 h-6" viewBox="0 0 32 24"><path d="M0 0H32V24H0z" fill="${color}"/>${alt ? `<path d="M12 0H24V12H12zM0 12H12V24H0zM24 12H32V24H24z" fill="${alt}"/>` : ""}</svg>
                <button aria-label="Toggle ${name}" class="ml-3 mr-2.5"><svg class="size-8" viewBox="0 0 32 32"><circle cx="16" cy="16" r="16" fill="#545454"/><path d="M3 16Q16 3 29 16Q16 29 3 16z" fill="#f3f3f3"/><circle cx="16" cy="16" r="4" fill="#f3f3f3" stroke="#545454" stroke-width="2"/></svg></button>
                <span>${name}</span>
            </li>`).join("");

        // tick boxes
        function check(label, checked, blue) {
            const on = blue ? "checked:bg-linear-to-b checked:from-[#4a90f8] checked:to-[#3477f5] checked:border-[#3f84f6]" : "";
            return `<label class="flex items-center gap-3 h-7"><span class="grid size-7 shrink-0">
                <input type="checkbox" ${checked ? "checked" : ""} class="peer col-start-1 row-start-1 appearance-none size-7 rounded-[7px] border border-[#cfcfcf] bg-white shadow-[0_1px_1px_rgba(0,0,0,0.12)] ${on}">
                <svg class="hidden peer-checked:block col-start-1 row-start-1 size-7 pointer-events-none" viewBox="0 0 28 28" fill="none" stroke="${blue ? "#fff" : "#262626"}" stroke-width="3.5" stroke-linecap="round" stroke-linejoin="round"><path d="${blue ? "M7 15L12 21L21 7" : "M6 14L12 20L21 7"}"/></svg>
            </span><span>${label}</span></label>`;
        }
        document.getElementById("filter").innerHTML = ["All items", "Locked items", "Footprints", "Text", "Tracks", "Vias", "Pads", "Graphics", "Zones", "Rule Areas", "Dimensions", "Other items"]
            .map((t) => `<div class="flex items-center">${check(t, t !== "Locked items")}</div>`).join("");
        document.getElementById("options").innerHTML = check("Re-link footprints to schematic symbols based on their reference designators", true, true);
        document.getElementById("footprints").innerHTML = check("Replace footprints with those specified by symbols", true, true) + check("Delete footprints with no symbols", true, true) + check("Override locks", false, true);
        document.getElementById("fields").innerHTML = check("Update footprint fields from symbols", true, true) + check("Remove footprint fields not found in symbols", false, true);
        document.querySelectorAll("[data-check]").forEach((el) => {
            const t = el.dataset.check;
            el.innerHTML = check(t, true, true)
                + (t === "Errors" ? `<span class="size-[30px] rounded-full bg-[#ea3323] text-white text-xl leading-[30px] font-semibold text-center">4</span>` : "")
                + (t === "Warnings" ? `<span class="size-[30px] rounded-full bg-[#377d22] text-white text-xl leading-[30px] font-semibold text-center">0</span>` : "");
            if (t === "Infos") el.insertAdjacentHTML("afterend", `<button class="w-[168px] h-10 pb-0.5 rounded-[10px] bg-white shadow-[0_1px_2px_rgba(0,0,0,0.35)]">Save...</button>`);
        });

        // drawing sheet, A4 landscape, 7.59 px per mm
        const X = (mm) => Math.floor(125.4 + mm * 7.59) + 0.5, Y = (mm) => Math.floor(139.6 + mm * 7.59) + 0.5;
        let s = "";
        for (let r = 0; r <= 21; r++) for (let c = 0; c <= 30; c++) {
            const w = c % 10 ? 2 : 5, h = r % 10 ? 3 : 5;
            s += `<rect x="${Math.round(X(c * 10) - w / 2)}" y="${Math.round(Y(r * 10) - h / 2)}" width="${w}" height="${h}" fill="${c % 10 && r % 10 ? "#56606a" : "#7d8084"}"/>`;
        }
        s += `<path d="M${X(0)} ${Y(0)}H${X(297)}V${Y(210)}H${X(0)}z" fill="none" stroke="#848484"/>`;
        let p = `M${X(10)} ${Y(10)}H${X(287)}V${Y(200)}H${X(10)}zM${X(12)} ${Y(12)}H${X(285)}V${Y(198)}H${X(12)}z`;
        const mark = (x, y, t, extra = "") => `<text x="${x}" y="${y}" ${extra}>${t}</text>`;
        let t = "";
        for (let i = 0; i < 6; i++) {
            if (i < 5) p += `M${X(60 + i * 50)} ${Y(10)}V${Y(12)}M${X(60 + i * 50)} ${Y(198)}V${Y(200)}`;
            t += mark(X(35.6 + i * 50), Y(11) + 5, i + 1, 'text-anchor="middle"') + mark(X(35.6 + i * 50), Y(199) + 5, i + 1, 'text-anchor="middle"');
        }
        ["A", "B", "C", "D"].forEach((ch, i) => {
            if (i < 3) p += `M${X(10)} ${Y(60 + i * 50)}H${X(12)}M${X(285)} ${Y(60 + i * 50)}H${X(287)}`;
            t += mark(X(11), Y(35) + 5 + i * 379.5, ch, 'text-anchor="middle"') + mark(X(286), Y(35) + 5 + i * 379.5, ch, 'text-anchor="middle"');
        });
        p += `M1468.5 1399.5H${X(285)}M1468.5 1517.5H${X(285)}M1468.5 1562.5H${X(285)}M1468.5 1593.5H${X(285)}M1468.5 1615.5H${X(285)}M1468.5 1399.5V${Y(198)}M1620.5 1593.5V1615.5M2106.5 1593.5V${Y(198)}`;
        t += mark(1478, 1611, "Size: A4") + mark(1645, 1611, "Date:") + mark(1478, 1632, "KiCad E.D.A. 9.0.7") + mark(2123, 1611, "Rev:", 'font-weight="600"') + mark(2123, 1632, "Id: 1/1");
        s += `<path d="${p}" fill="none" stroke="#c872ab"/><g font-family="Inter" font-weight="300" font-size="16" fill="#c872ab">${t}</g>`;
        document.getElementById("board").innerHTML = s;
    </script>
</body>
</html>
